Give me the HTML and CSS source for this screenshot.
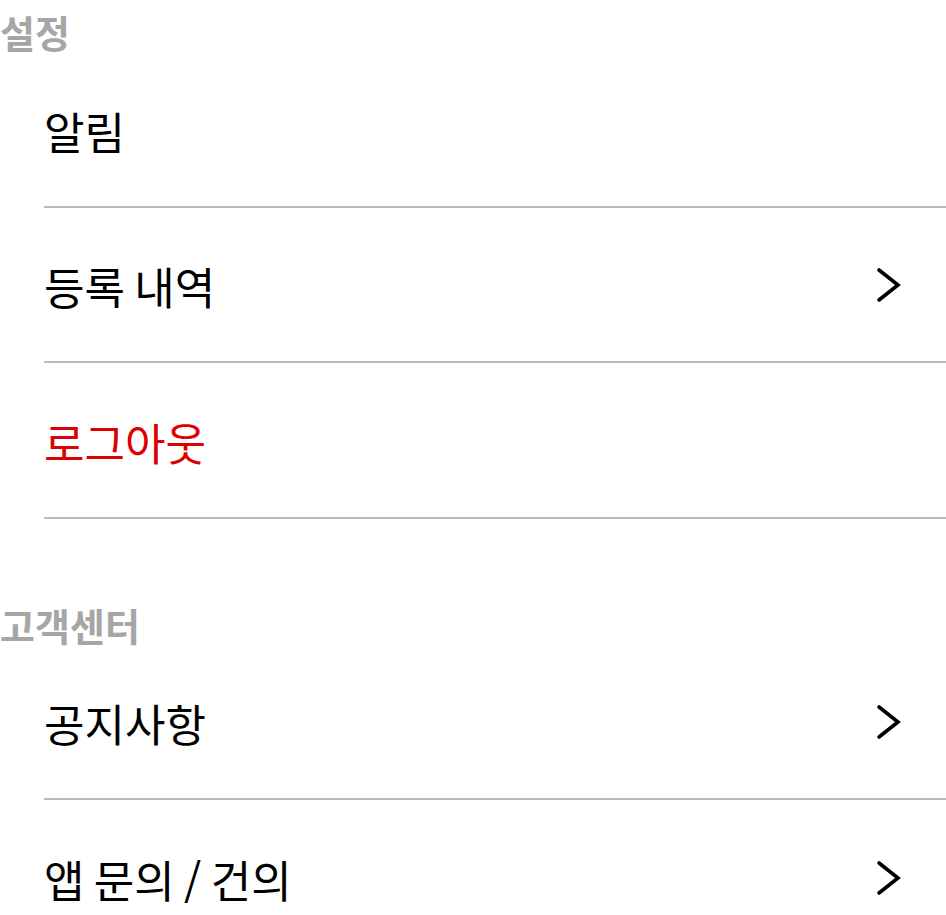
FILE: index.html
```html
<!DOCTYPE html>
<html lang="ko">
<head>
<meta charset="utf-8">
<link rel="stylesheet" href="styles.css">
</head>
<body>
<section class="section">
  <h2 class="section-title">설정</h2>
  <ul class="menu">
    <li class="menu-item"><span class="label">알림</span></li>
    <li class="menu-item"><span class="label">등록 내역</span>
      <svg class="chev" viewBox="0 0 26 36" width="26" height="36"><path d="M3 3 L22 18 L3 33" fill="none" stroke="#000" stroke-width="3.6" stroke-linecap="round" stroke-linejoin="miter"/></svg>
    </li>
    <li class="menu-item"><span class="label danger">로그아웃</span></li>
  </ul>
</section>
<section class="section second">
  <h2 class="section-title">고객센터</h2>
  <ul class="menu">
    <li class="menu-item"><span class="label">공지사항</span>
      <svg class="chev" viewBox="0 0 26 36" width="26" height="36"><path d="M3 3 L22 18 L3 33" fill="none" stroke="#000" stroke-width="3.6" stroke-linecap="round" stroke-linejoin="miter"/></svg>
    </li>
    <li class="menu-item"><span class="label">앱 문의 / 건의</span>
      <svg class="chev" viewBox="0 0 26 36" width="26" height="36"><path d="M3 3 L22 18 L3 33" fill="none" stroke="#000" stroke-width="3.6" stroke-linecap="round" stroke-linejoin="miter"/></svg>
    </li>
  </ul>
</section>
</body>
</html>
```
FILE: styles.css
```css
html, body {
  margin: 0;
  padding: 0;
  background: #fff;
}
body {
  font-family: "Noto Sans CJK KR", "Noto Sans", sans-serif;
  color: #000;
  overflow: hidden;
}
.section-title {
  margin: 0;
  padding-top: 12px;
  height: 40px;
  line-height: 40px;
  font-size: 38px;
  font-weight: 700;
  color: #a6a6a6;
}
.second {
  margin-top: 74px;
}
.menu {
  list-style: none;
  margin: 0 0 0 44px;
  padding: 0;
}
.menu-item {
  display: flex;
  align-items: center;
  justify-content: space-between;
  height: 149.5px;
  padding-top: 4px;
  border-bottom: 2px solid #bbbbbb;
  padding-right: 44px;
}
.label {
  font-size: 44px;
  line-height: 56px;
  word-spacing: -3px;
}
.danger {
  color: #dd0000;
}
.chev {
  display: block;
  margin-top: -2px;
}
```
